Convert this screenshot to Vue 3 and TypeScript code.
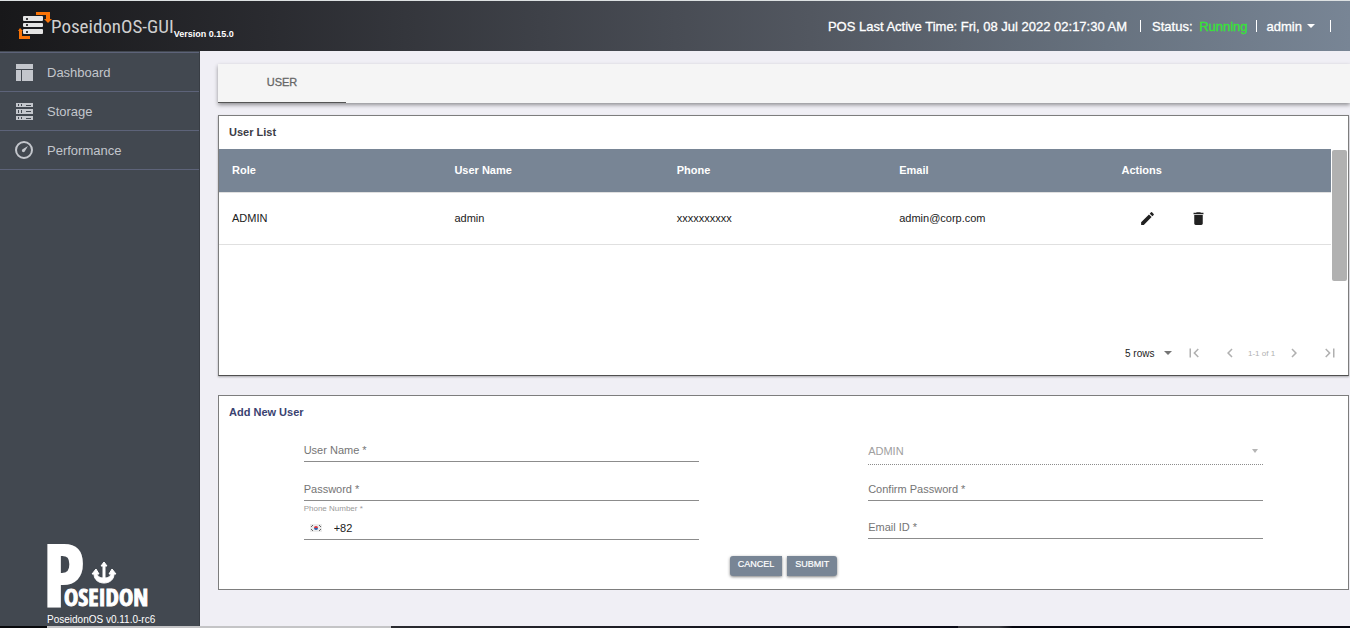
<script setup lang="ts">
import { ref } from 'vue'

interface User {
  role: string
  name: string
  phone: string
  email: string
}

const columns: string[] = ['Role', 'User Name', 'Phone', 'Email', 'Actions']
const users = ref<User[]>([
  { role: 'ADMIN', name: 'admin', phone: 'xxxxxxxxxx', email: 'admin@corp.com' },
])
const form = ref({ name: '', password: '', phone: '+82', confirm: '', email: '' })
</script>

<template>
  <div class="page">
    <header class="header">
      <svg class="brand-icon" width="33" height="30" viewBox="0 0 33 30" aria-hidden="true">
        <g fill="#fa7306">
          <path d="M18 1h14v7h2l-4 4-4-4h2V4H18z" />
          <path d="M0 20l2-3 3 3H4v5h8v3H1v-8z" />
        </g>
        <g fill="#e4e4e4">
          <rect x="5" y="5" width="20" height="5" rx="1" />
          <rect x="5" y="12" width="20" height="4" rx="1" />
          <rect x="5" y="18" width="20" height="5" rx="1" />
        </g>
        <g fill="#3c3c3e">
          <rect x="8" y="7" width="2" height="2" />
          <rect x="8" y="13" width="2" height="2" />
          <rect x="8" y="20" width="2" height="2" />
        </g>
      </svg>
      <span class="brand">PoseidonOS-GUI</span>
      <span class="version">Version 0.15.0</span>
      <div class="status">
        <span>POS Last Active Time: Fri, 08 Jul 2022 02:17:30 AM</span>
        <span class="bar"></span>
        <span class="state">Status: <b class="running">Running</b></span>
        <span class="bar"></span>
        <button type="button" class="account">
          admin
          <svg width="8" height="4" viewBox="0 0 8 4" aria-hidden="true"><path d="M0 0h8L4 4z" fill="currentColor" /></svg>
        </button>
        <span class="bar"></span>
      </div>
    </header>

    <div class="body">
      <aside class="sidebar">
        <nav class="nav">
          <a href="#dashboard">
            <svg width="18" height="18" viewBox="0 0 18 18" fill="currentColor" aria-hidden="true">
              <path d="M1 1h17v5H1zM1 7h5v11H1zM7 7h11v11H7z" />
            </svg>
            Dashboard
          </a>
          <a href="#storage">
            <svg width="18" height="18" viewBox="0 0 18 18" aria-hidden="true">
              <path d="M1 1h17v4H1zM1 7h17v5H1zM1 14h17v4H1z" fill="currentColor" />
              <path d="M3 2h1v2H3zM6 2h1v2H6zM11 3h5v1h-5zM3 8h1v3H3zM6 8h1v3H6zM11 9h5v1h-5zM3 15h1v2H3zM6 15h1v2H6zM11 16h5v1h-5z" fill="#424850" />
            </svg>
            Storage
          </a>
          <a href="#performance">
            <svg width="18" height="18" viewBox="0 0 18 18" aria-hidden="true">
              <circle cx="9" cy="9" r="8" fill="none" stroke="currentColor" stroke-width="2" />
              <path d="M13 5l-3 5a1.6 1.6 0 1 1-2-2z" fill="currentColor" />
            </svg>
            Performance
          </a>
        </nav>
        <div class="product">
          <svg class="product-logo" width="104" height="72" viewBox="0 0 104 72" fill="#fff">
            <text x="-4" y="67" class="logo-initial">P</text>
            <text x="17" y="67" class="logo-rest">OSEIDON</text>
            <path d="M57 23l3 4h-2v12c4 0 6-3 6-4h-2l3-5 4 5h-2c0 6-5 9-10 9s-10-3-10-9h-2l4-5 3 5h-2c0 1 2 4 6 4V27h-2z" stroke="#fff" stroke-width="1" />
          </svg>
          <span>PoseidonOS v0.11.0-rc6</span>
        </div>
      </aside>

      <main class="content">
        <div class="tabs" role="tablist">
          <button type="button" class="tab" role="tab" aria-selected="true">USER</button>
        </div>

        <section class="card list">
          <h2>User List</h2>
          <div class="scroller">
            <table>
              <thead>
                <tr>
                  <th v-for="column in columns" :key="column" scope="col">{{ column }}</th>
                </tr>
              </thead>
              <tbody>
                <tr v-for="user in users" :key="user.name">
                  <td>{{ user.role }}</td>
                  <td>{{ user.name }}</td>
                  <td>{{ user.phone }}</td>
                  <td>{{ user.email }}</td>
                  <td>
                    <div class="actions">
                      <button type="button" aria-label="Edit">
                        <svg width="17" height="17" viewBox="0 0 24 24" fill="currentColor"><path d="M3 17.25V21h3.75L17.81 9.94l-3.75-3.75zM20.71 7.04a1 1 0 0 0 0-1.41l-2.34-2.34a1 1 0 0 0-1.41 0l-1.83 1.83 3.75 3.75z" /></svg>
                      </button>
                      <button type="button" aria-label="Delete">
                        <svg width="17" height="17" viewBox="0 0 24 24" fill="currentColor"><path d="M6 19c0 1.1.9 2 2 2h8c1.1 0 2-.9 2-2V7H6zM19 4h-3.5l-1-1h-5l-1 1H5v2h14z" /></svg>
                      </button>
                    </div>
                  </td>
                </tr>
              </tbody>
            </table>
            <div class="track"><div class="thumb"></div></div>
          </div>
          <div class="pager">
            <div class="select rows">
              <select aria-label="Rows per page">
                <option>5 rows</option>
                <option>10 rows</option>
              </select>
              <svg width="8" height="4" viewBox="0 0 8 4" aria-hidden="true"><path d="M0 0h8L4 4z" fill="#757575" /></svg>
            </div>
            <button type="button" disabled aria-label="First page">
              <svg width="18" height="18" viewBox="0 0 24 24" fill="currentColor"><path d="M18.41 16.59L13.82 12l4.59-4.59L17 6l-6 6 6 6zM6 6h2v12H6z" /></svg>
            </button>
            <button type="button" disabled aria-label="Previous page">
              <svg width="18" height="18" viewBox="0 0 24 24" fill="currentColor"><path d="M15.41 7.41L14 6l-6 6 6 6 1.41-1.41L10.83 12z" /></svg>
            </button>
            <span class="range">1-1 of 1</span>
            <button type="button" disabled aria-label="Next page">
              <svg width="18" height="18" viewBox="0 0 24 24" fill="currentColor"><path d="M10 6L8.59 7.41 13.17 12l-4.58 4.59L10 18l6-6z" /></svg>
            </button>
            <button type="button" disabled aria-label="Last page">
              <svg width="18" height="18" viewBox="0 0 24 24" fill="currentColor"><path d="M5.59 7.41L10.18 12l-4.59 4.59L7 18l6-6-6-6zM16 6h2v12h-2z" /></svg>
            </button>
          </div>
        </section>

        <section class="card">
          <h2 class="form-title">Add New User</h2>
          <form @submit.prevent>
            <div class="fields">
              <div class="column">
                <div class="field">
                  <label v-show="!form.name" for="name">User Name *</label>
                  <input id="name" v-model="form.name" type="text" />
                </div>
                <div class="field">
                  <label v-show="!form.password" for="password">Password *</label>
                  <input id="password" v-model="form.password" type="password" />
                </div>
                <div class="phone">
                  <label for="phone">Phone Number *</label>
                  <div class="phone-row">
                    <svg width="12" height="8" viewBox="0 0 12 8" aria-hidden="true">
                      <rect width="12" height="8" fill="#ececec" />
                      <path d="M4 4a2 2 0 0 1 4 0z" fill="#d8353f" />
                      <path d="M4 4a2 2 0 0 0 4 0z" fill="#2d5fae" />
                      <path d="M1 3l2-2M1 5l2 2M9 1l2 2M9 7l2-2" stroke="#666" stroke-width="1" />
                    </svg>
                    <input id="phone" v-model="form.phone" type="tel" />
                  </div>
                </div>
              </div>
              <div class="column">
                <div class="select role">
                  <select disabled aria-label="Role"><option>ADMIN</option></select>
                  <svg width="6" height="4" viewBox="0 0 6 4" aria-hidden="true"><path d="M0 0h6L3 4z" fill="#b5b5b5" /></svg>
                </div>
                <div class="field short">
                  <label v-show="!form.confirm" for="confirm">Confirm Password *</label>
                  <input id="confirm" v-model="form.confirm" type="password" />
                </div>
                <div class="field email">
                  <label v-show="!form.email" for="email">Email ID *</label>
                  <input id="email" v-model="form.email" type="email" />
                </div>
              </div>
            </div>
            <div class="buttons">
              <button type="reset" class="cancel">CANCEL</button>
              <button type="submit" class="submit">SUBMIT</button>
            </div>
          </form>
        </section>
      </main>
    </div>
    <div class="edge"></div>
  </div>
</template>

<style>
body {
  margin: 0;
}
</style>

<style scoped>
* {
  box-sizing: border-box;
}

.page {
  display: flex;
  flex-direction: column;
  min-height: 100vh;
  background: #f0eff5;
  color: #212121;
  font-family: "Liberation Sans", Arial, sans-serif;
  font-size: 11px;
}

button,
input,
select {
  margin: 0;
  padding: 0;
  border: 0;
  background: none;
  color: inherit;
  font: inherit;
  outline: none;
}

svg {
  display: block;
  flex: none;
  overflow: visible;
}

.header {
  display: flex;
  align-items: center;
  height: 51px;
  padding: 0 19px 0 18px;
  border-top: 1px solid #dde1e2;
  background: linear-gradient(to right, #18181a 0%, #2a2b30 20%, #525760 60%, #67727f 82%, #788595 100%);
  color: #fff;
}

.brand {
  color: #cfcfcf;
  font-family: "Roboto Condensed", "Liberation Sans", sans-serif;
  font-size: 19px;
}

.version {
  padding-top: 16px;
  font-size: 9px;
  font-weight: 700;
  line-height: 12px;
}

.status {
  display: flex;
  align-items: center;
  margin-left: auto;
  font-size: 13px;
  -webkit-text-stroke: 0.3px currentColor;
}

.bar {
  width: 1px;
  height: 12px;
  margin: 0 11px 0 13px;
  background: #fff;
}

.state + .bar {
  margin: 0 10px 0 8px;
}

.account + .bar {
  margin: 0 0 0 15px;
}

.running {
  margin-left: 3px;
  color: #35e635;
  font-weight: 400;
}

.account {
  display: flex;
  align-items: center;
  gap: 5px;
}

.body {
  display: flex;
  flex: 1;
}

.sidebar {
  display: flex;
  flex: none;
  flex-direction: column;
  justify-content: space-between;
  width: 200px;
  border-right: 1px solid #383d44;
  background: #424850;
}

.nav {
  margin-top: 1px;
  border-top: 1px solid #5d6379;
}

.nav a {
  display: flex;
  align-items: center;
  gap: 14px;
  height: 39px;
  padding-left: 15px;
  border-bottom: 1px solid #5d6379;
  color: #c3c6cc;
  font-size: 13px;
  text-decoration: none;
}

.product {
  padding-left: 47px;
  color: #fff;
  font-size: 10px;
  line-height: 12px;
  white-space: nowrap;
}

.product-logo {
  margin-bottom: 3px;
}

.logo-initial,
.logo-rest {
  font-family: "Open Sans Condensed", "Roboto Condensed", sans-serif;
  font-weight: 700;
  stroke: #fff;
}

.logo-initial {
  font-size: 86px;
  stroke-width: 2px;
}

.logo-rest {
  font-size: 24px;
  stroke-width: 1px;
}

.content {
  flex: 1;
  min-width: 0;
  padding: 13px 1px 36px 18px;
}

.tabs {
  height: 39px;
  margin-right: -1px;
  background: #f5f5f5;
  box-shadow: 0 2px 4px rgba(0, 0, 0, 0.4);
}

.tab {
  width: 128px;
  height: 39px;
  padding-bottom: 2px;
  border-bottom: 1px solid #555;
  color: #666;
  -webkit-text-stroke: 0.3px currentColor;
}

.card {
  border: 1px solid #7d7d7d;
  background: #fff;
}

.list {
  margin: 12px 0 19px;
  border-bottom-color: #4f4f4f;
  box-shadow: 0 1px 2px rgba(0, 0, 0, 0.3);
}

h2 {
  margin: 0;
  padding-left: 10px;
  color: #3c3c46;
  font-size: 11px;
  line-height: 33px;
}

.form-title {
  color: #3a4270;
}

.scroller {
  display: flex;
  height: 184px;
}

table {
  flex: 1;
  align-self: flex-start;
  border-collapse: collapse;
  table-layout: fixed;
}

th {
  height: 43px;
  padding: 0 13px;
  background: #788595;
  color: #fff;
  text-align: left;
}

td {
  height: 52px;
  padding: 0 13px;
  border-top: 1px solid #e0e0e0;
  border-bottom: 1px solid #e0e0e0;
}

th,
td {
  width: 20%;
}

.actions {
  display: flex;
}

.actions button {
  display: grid;
  place-items: center;
  width: 51px;
  height: 24px;
}

.track {
  width: 17px;
  padding: 1px;
}

.thumb {
  width: 15px;
  height: 131px;
  border-radius: 2px;
  background: #b1b1b1;
}

.pager {
  display: flex;
  align-items: center;
  justify-content: flex-end;
  height: 42px;
  padding-bottom: 2px;
  color: #b0b0b0;
}

.pager button {
  display: grid;
  place-items: center;
  width: 36px;
  height: 36px;
}

.range {
  width: 28px;
  font-size: 8px;
  white-space: nowrap;
}

.select {
  display: grid;
  align-items: center;
}

.select select,
.select svg {
  grid-area: 1 / 1;
}

.select select {
  width: 100%;
  appearance: none;
  opacity: 1;
}

.select svg {
  justify-self: end;
  pointer-events: none;
}

.rows {
  width: 47px;
  margin-right: 4px;
  color: #212121;
  font-size: 10px;
}

.fields {
  display: grid;
  grid-template-columns: 1fr 1fr;
}

.column {
  width: 70%;
  margin: 0 auto;
}

.field {
  display: grid;
  height: 39px;
  padding-top: 14px;
  border-bottom: 1px solid #8c8c8c;
}

.column > .field:first-child {
  height: 33px;
  padding-top: 8px;
}

.field label,
.field input {
  grid-area: 1 / 1;
  min-width: 0;
}

.field label {
  color: #757575;
  line-height: 24px;
  padding-top: 1px;
  pointer-events: none;
}

.field.short {
  height: 36px;
  padding-top: 11px;
}

.field.email {
  height: 38px;
  padding-top: 13px;
}

.role {
  height: 36px;
  padding: 8px 5px 0 0;
  border-bottom: 1px dotted #8c8c8c;
  color: #a0a0a0;
}

.phone {
  border-bottom: 1px solid #8c8c8c;
}

.phone label {
  display: block;
  padding-top: 3px;
  color: #9a9a9a;
  font-size: 8px;
  line-height: 10px;
}

.phone-row {
  display: flex;
  align-items: center;
  gap: 12px;
  height: 25px;
  padding: 3px 0 0 6px;
}

.phone-row input {
  flex: 1;
  min-width: 0;
}

.buttons {
  display: flex;
  justify-content: center;
  gap: 5px;
  padding: 16px 0 13px;
}

.buttons button {
  height: 20px;
  padding: 0 8px 4px;
  background: #788595;
  box-shadow: 0 1px 3px rgba(0, 0, 0, 0.5);
  color: #fff;
  font-size: 9px;
  -webkit-text-stroke: 0.2px currentColor;
}

.buttons .cancel {
  border-radius: 3px 0 0 3px;
}

.buttons .submit {
  border-radius: 0 3px 3px 0;
}

.edge {
  height: 2px;
  background: linear-gradient(to right, #08090c 47px, #c4c4c6 47px 391px, #2b2b30 391px, #0a0a16 71%, #3c3c42 71% 74%, #05060f 75%);
}
</style>
